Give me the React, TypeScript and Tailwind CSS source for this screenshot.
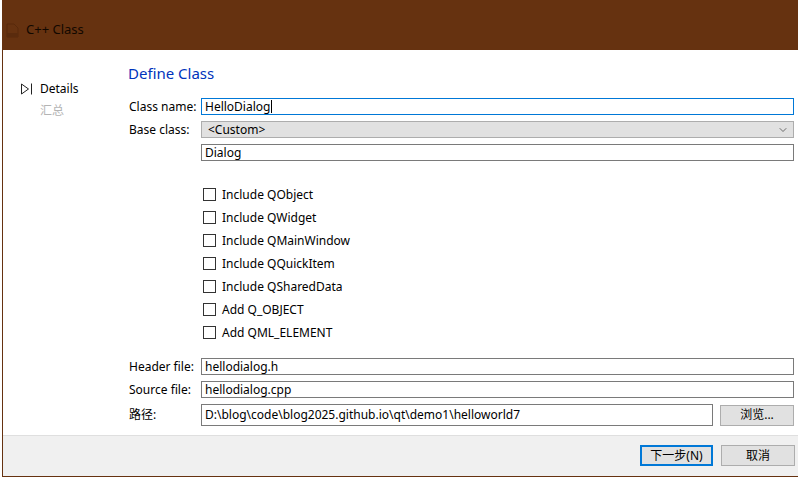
import { ChevronDown } from "lucide-react";

// Qt Creator "C++ Class" wizard — Define Class page.
const OPTIONS = [
  "Include QObject",
  "Include QWidget",
  "Include QMainWindow",
  "Include QQuickItem",
  "Include QSharedData",
  "Add Q_OBJECT",
  "Add QML_ELEMENT",
];

const font = "font-['Noto_Sans','Noto_Sans_CJK_SC',sans-serif]";

function Field({ value, focused }: { value: string; focused?: boolean }) {
  return (
    <div
      className={`flex h-[17px] w-full items-center border bg-white px-[3px] leading-none ${
        focused ? "border-[#0078d7]" : "border-[#7a7a7a]"
      }`}
    >
      <span>{value}</span>
      {focused && <span className="ml-[1px] h-[13px] w-px bg-black" />}
    </div>
  );
}

function Row({ label, children }: { label: string; children: React.ReactNode }) {
  return (
    <div className="flex items-center leading-none">
      <div className="w-[73px] shrink-0 pl-[1px]">{label}</div>
      <div className="min-w-0 flex-1">{children}</div>
    </div>
  );
}

function WinButton({ label, primary }: { label: string; primary?: boolean }) {
  return (
    <button
      className={`flex h-[21px] items-center justify-center bg-[#e1e1e1] leading-none text-black ${
        primary ? "w-[73px] border-2 border-[#0078d7]" : "w-[74px] border border-[#adadad]"
      }`}
    >
      {label}
    </button>
  );
}

export default function App() {
  return (
    <div className={`h-[478px] w-[798px] overflow-hidden bg-white text-[12px] text-black ${font}`}>
      <div className="ml-[2px] flex h-[477px] flex-col border-b border-l border-[#663210]">
        {/* title bar */}
        <div className="flex h-[50px] shrink-0 items-center bg-[#663210] pt-[10px]">
          <svg width="13" height="15" viewBox="0 0 13 15" className="ml-[3px]">
            <path d="M1 1h7l4 4v9H1z" fill="none" stroke="#58290b" strokeWidth="1" />
            <path d="M1 10h11v4H1z" fill="#5a2b0d" />
          </svg>
          <span className="ml-[7px] text-[13px] text-[#120800]">C++ Class</span>
        </div>

        {/* body */}
        <div className="flex min-h-0 flex-1">
          <div className="w-[125px] shrink-0 pt-[31px]">
            <div className="flex h-[16px] items-center">
              <svg width="14" height="12" viewBox="0 0 14 12" className="ml-[17px]">
                <path d="M1.5 1v10l7-5z" fill="none" stroke="#222" strokeWidth="1" />
                <path d="M11.5 0.5v11" stroke="#222" strokeWidth="1" />
              </svg>
              <span className="ml-[6px]">Details</span>
            </div>
            <div className="ml-[37px] mt-[5px] text-[#b4b4b4]">汇总</div>
          </div>

          <div className="min-w-0 flex-1 pr-[4px] pt-[13px]">
            <div className="h-[20px] text-[15px] leading-[20px] text-[#0033bc]">Define Class</div>

            <div className="mt-[15px] flex flex-col gap-[6px]">
              <Row label="Class name:">
                <Field value="HelloDialog" focused />
              </Row>
              <Row label="Base class:">
                <div className="flex h-[17px] w-full items-center justify-between border border-[#adadad] bg-[#e1e1e1] pl-[6px] pr-[4px] leading-none">
                  <span>&lt;Custom&gt;</span>
                  <ChevronDown size={12} strokeWidth={1.5} className="text-[#444]" />
                </div>
              </Row>
              <Row label="">
                <Field value="Dialog" />
              </Row>
            </div>

            <div className="mt-[22px] flex flex-col pl-[75px]">
              {OPTIONS.map((o) => (
                <label key={o} className="flex h-[23px] items-center">
                  <span className="h-[13px] w-[13px] border border-[#333] bg-white" />
                  <span className="ml-[6px]">{o}</span>
                </label>
              ))}
            </div>

            <div className="mt-[14px] flex flex-col gap-[6px]">
              <Row label="Header file:">
                <Field value="hellodialog.h" />
              </Row>
              <Row label="Source file:">
                <Field value="hellodialog.cpp" />
              </Row>
              <Row label="路径:">
                <div className="flex items-center gap-[7px]">
                  <div className="flex h-[22px] min-w-0 flex-1 items-center border border-[#7a7a7a] bg-white px-[3px]">
                    D:\blog\code\blog2025.github.io\qt\demo1\helloworld7
                  </div>
                  <WinButton label="浏览..." />
                </div>
              </Row>
            </div>
          </div>
        </div>

        {/* footer */}
        <div className="flex h-[41px] shrink-0 items-start justify-end gap-[8px] border-t border-[#dfdfdf] bg-[#f0f0f0] pr-[3px] pt-[9px]">
          <WinButton label="下一步(N)" primary />
          <WinButton label="取消" />
        </div>
      </div>
    </div>
  );
}
